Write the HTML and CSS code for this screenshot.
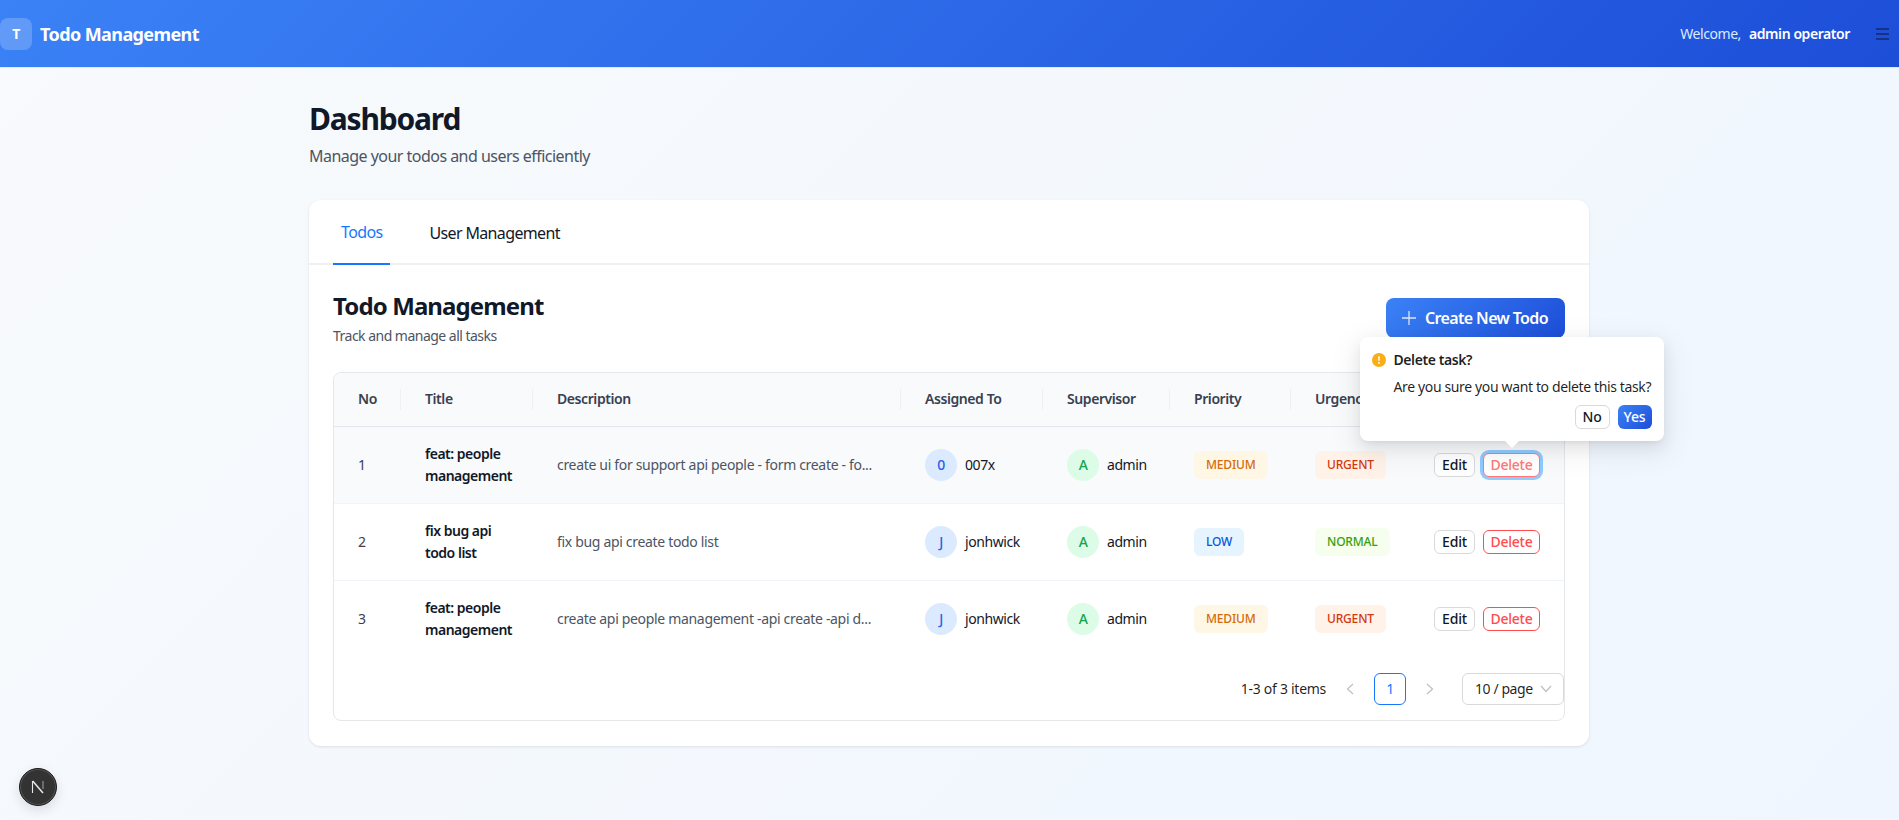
FILE: index.html
```html
<!DOCTYPE html>
<html lang="en">
<head>
    <meta charset="UTF-8" />
    <meta name="viewport" content="width=device-width, initial-scale=1" />
    <title>Todo Management</title>
    <link rel="stylesheet" href="styles.css">
</head>
<body>
    <header class="topbar">
        <div class="brand">
            <span class="brand_logo">T</span>
            <span class="brand_name">Todo Management</span>
        </div>
        <div class="user_box">
            <span class="welcome">Welcome,</span>
            <span class="user_name">admin operator</span>
            <svg class="burger" width="13" height="12" viewBox="0 0 13 12"><path d="M0 1h13M0 6h13M0 11h13" stroke="#14296b" stroke-width="1.5"/></svg>
        </div>
    </header>

    <main class="page">
        <h1 class="page_title">Dashboard</h1>
        <p class="page_sub">Manage your todos and users efficiently</p>

        <section class="card">
            <nav class="tabs">
                <a class="tab active">Todos</a>
                <a class="tab">User Management</a>
            </nav>

            <div class="card_body">
                <div class="section_head">
                    <div>
                        <h2 class="section_title">Todo Management</h2>
                        <p class="section_sub">Track and manage all tasks</p>
                    </div>
                    <button class="btn_create">
                        <svg width="14" height="14" viewBox="0 0 14 14"><path d="M7 0v14M0 7h14" stroke="#dbe6fd" stroke-width="1.3"/></svg>
                        Create New Todo
                    </button>
                </div>

                <div class="table_box">
                    <table class="todo_table">
                        <colgroup>
                            <col class="col_no"><col class="col_title"><col class="col_desc"><col class="col_assigned">
                            <col class="col_super"><col class="col_priority"><col class="col_urgency"><col class="col_actions">
                        </colgroup>
                        <thead>
                            <tr>
                                <th>No</th>
                                <th>Title</th>
                                <th>Description</th>
                                <th>Assigned To</th>
                                <th>Supervisor</th>
                                <th>Priority</th>
                                <th>Urgency</th>
                                <th>Actions</th>
                            </tr>
                        </thead>
                        <tbody>
                            <tr class="row_hover">
                                <td>1</td>
                                <td class="cell_title">feat: people management</td>
                                <td class="cell_desc">create ui for support api people - form create - fo...</td>
                                <td><div class="person"><span class="avatar blue">0</span>007x</div></td>
                                <td><div class="person"><span class="avatar green">A</span>admin</div></td>
                                <td><span class="badge orange">MEDIUM</span></td>
                                <td><span class="badge red">URGENT</span></td>
                                <td>
                                    <div class="actions">
                                        <button class="btn_small btn_edit">Edit</button>
                                        <div class="delete_wrap">
                                            <button class="btn_small btn_danger focused">Delete</button>
                                            <div class="popconfirm">
                                                <div class="pop_head">
                                                    <svg width="14" height="14" viewBox="0 0 14 14"><circle cx="7" cy="7" r="7" fill="#faad14"/><path d="M7 3.2v4.6" stroke="#fff" stroke-width="1.5"/><circle cx="7" cy="10" r=".9" fill="#fff"/></svg>
                                                    <span class="pop_title">Delete task?</span>
                                                </div>
                                                <p class="pop_msg">Are you sure you want to delete this task?</p>
                                                <div class="pop_btns">
                                                    <button class="btn_small">No</button>
                                                    <button class="btn_small btn_yes">Yes</button>
                                                </div>
                                            </div>
                                        </div>
                                    </div>
                                </td>
                            </tr>
                            <tr>
                                <td>2</td>
                                <td class="cell_title">fix bug api todo list</td>
                                <td class="cell_desc">fix bug api create todo list</td>
                                <td><div class="person"><span class="avatar blue">J</span>jonhwick</div></td>
                                <td><div class="person"><span class="avatar green">A</span>admin</div></td>
                                <td><span class="badge blue_tag">LOW</span></td>
                                <td><span class="badge green_tag">NORMAL</span></td>
                                <td>
                                    <div class="actions">
                                        <button class="btn_small btn_edit">Edit</button>
                                        <button class="btn_small btn_danger">Delete</button>
                                    </div>
                                </td>
                            </tr>
                            <tr>
                                <td>3</td>
                                <td class="cell_title">feat: people management</td>
                                <td class="cell_desc">create api people management -api create -api d...</td>
                                <td><div class="person"><span class="avatar blue">J</span>jonhwick</div></td>
                                <td><div class="person"><span class="avatar green">A</span>admin</div></td>
                                <td><span class="badge orange">MEDIUM</span></td>
                                <td><span class="badge red">URGENT</span></td>
                                <td>
                                    <div class="actions">
                                        <button class="btn_small btn_edit">Edit</button>
                                        <button class="btn_small btn_danger">Delete</button>
                                    </div>
                                </td>
                            </tr>
                        </tbody>
                    </table>

                    <div class="pager">
                        <span class="pager_total">1-3 of 3 items</span>
                        <svg class="pager_arrow" width="8" height="12" viewBox="0 0 8 12"><path d="M7 1L1.5 6L7 11" fill="none" stroke="#bfbfbf" stroke-width="1.2"/></svg>
                        <span class="pager_num">1</span>
                        <svg class="pager_arrow" width="8" height="12" viewBox="0 0 8 12"><path d="M1 1L6.5 6L1 11" fill="none" stroke="#bfbfbf" stroke-width="1.2"/></svg>
                        <div class="pager_size">
                            10 / page
                            <svg width="12" height="8" viewBox="0 0 12 8"><path d="M1 1L6 6.5L11 1" fill="none" stroke="#bfbfbf" stroke-width="1.2"/></svg>
                        </div>
                    </div>
                </div>
            </div>
        </section>
    </main>

    <div class="next_badge">
        <svg width="14" height="14" viewBox="0 0 14 14"><path d="M1.5 1v12" stroke="#e8e8e8" stroke-width="1.1"/><path d="M1.7 1L12 13" stroke="#e8e8e8" stroke-width="1.5"/><path d="M12 1v8" stroke="#9a9a9a" stroke-width="1.1"/></svg>
    </div>
</body>
</html>
```

FILE: styles.css
```css
* {
    box-sizing: border-box;
}

html, body {
    margin: 0;
    height: 100%;
}

body {
    font-family: "Noto Sans", "Open Sans", sans-serif;
    font-size: 14px;
    line-height: 22px;
    letter-spacing: -0.03em;
    color: #111827;
    background: linear-gradient(135deg, #f8fafc 0%, #eff6ff 100%);
    overflow: hidden;
}

button {
    font-family: inherit;
    letter-spacing: inherit;
}

.topbar {
    height: 68px;
    display: flex;
    align-items: center;
    justify-content: space-between;
    padding-right: 10px;
    background: linear-gradient(135deg, #3b82f6 0%, #1d4ed8 100%);
    border-bottom: 1px solid #dbeafe;
}

.brand {
    display: flex;
    align-items: center;
    gap: 8px;
}

.brand_logo {
    width: 32px;
    height: 32px;
    border-radius: 8px;
    background: rgba(255, 255, 255, 0.2);
    color: #fff;
    font-weight: 700;
    display: flex;
    align-items: center;
    justify-content: center;
}

.brand_name {
    color: #fff;
    font-size: 18px;
    font-weight: 700;
    letter-spacing: -0.033em;
}

.user_box {
    display: flex;
    align-items: center;
    color: #fff;
}

.welcome {
    color: #dbeafe;
    margin-right: 8px;
}

.user_name {
    font-weight: 600;
    margin-right: 26px;
}

.page {
    width: 1280px;
    margin-left: 309px;
    padding-top: 33px;
}

.page_title {
    margin: 0 0 7px;
    font-size: 30px;
    line-height: 36px;
    font-weight: 700;
    letter-spacing: -0.04em;
}

.page_sub {
    margin: 0 0 32px;
    font-size: 16px;
    line-height: 24px;
    letter-spacing: -0.033em;
    color: #4b5563;
}

.card {
    background: #fff;
    border-radius: 12px;
    box-shadow: 0 1px 3px rgba(0, 0, 0, 0.1);
}

.tabs {
    display: flex;
    gap: 31px;
    height: 65px;
    padding: 0 24px;
    border-bottom: 2px solid #f0f0f0;
}

.tab {
    display: flex;
    align-items: center;
    height: 65px;
    padding: 0 8px;
    font-size: 16px;
    letter-spacing: -0.04em;
    color: #111827;
}

.tab.active {
    color: #1677ff;
    border-bottom: 2px solid #1677ff;
}

.card_body {
    padding: 25px 24px;
}

.section_head {
    display: flex;
    align-items: center;
    justify-content: space-between;
    margin-bottom: 26px;
}

.section_title {
    margin: 0 0 4px;
    font-size: 24px;
    line-height: 32px;
    font-weight: 700;
    letter-spacing: -0.037em;
}

.section_sub {
    margin: 0;
    font-size: 14px;
    line-height: 20px;
    letter-spacing: -0.037em;
    color: #4b5563;
}

.btn_create {
    display: flex;
    align-items: center;
    gap: 9px;
    width: 179px;
    height: 40px;
    padding: 0 0 0 16px;
    border: none;
    border-radius: 8px;
    background: linear-gradient(135deg, #3b82f6 0%, #1d4ed8 100%);
    color: #fff;
    font-size: 16px;
    font-weight: 600;
    letter-spacing: -0.04em;
}

.table_box {
    border: 1px solid #e5e7eb;
    border-radius: 8px;
    padding-bottom: 15px;
}

.todo_table {
    width: 100%;
    border-collapse: collapse;
    table-layout: fixed;
}

.col_no { width: 67px; }
.col_title { width: 132px; }
.col_desc { width: 368px; }
.col_assigned { width: 142px; }
.col_super { width: 127px; }
.col_priority { width: 121px; }
.col_urgency { width: 119px; }
.col_actions { width: 154px; }

.todo_table th {
    position: relative;
    height: 53px;
    padding: 0 24px;
    text-align: left;
    font-weight: 600;
    color: #374151;
    background: #f9fafb;
    border-bottom: 1px solid #e2e8f0;
}

.todo_table th:first-child {
    border-top-left-radius: 8px;
}

.todo_table th:last-child {
    border-top-right-radius: 8px;
}

.todo_table th:not(:last-child)::before {
    content: "";
    position: absolute;
    right: 0;
    top: 16px;
    width: 1px;
    height: 21px;
    background: #eef0f3;
}

.todo_table td {
    height: 77px;
    padding: 16px 24px;
    color: #374151;
    border-bottom: 1px solid #f1f5f9;
}

.todo_table tr:last-child td {
    border-bottom: none;
}

.row_hover td {
    background: #f9fafb;
}

.todo_table .cell_title {
    color: #111827;
    font-weight: 600;
    letter-spacing: -0.035em;
}

.todo_table .cell_desc {
    color: #4b5563;
    white-space: nowrap;
    letter-spacing: -0.023em;
}

.person {
    display: flex;
    align-items: center;
    gap: 8px;
    color: #111827;
}

.avatar {
    width: 32px;
    height: 32px;
    flex: none;
    border-radius: 50%;
    display: flex;
    align-items: center;
    justify-content: center;
    font-weight: 500;
}

.avatar.blue {
    background: #dbeafe;
    color: #2563eb;
}

.avatar.green {
    background: #dcfce7;
    color: #16a34a;
}

.badge {
    display: inline-block;
    height: 28px;
    padding: 0 12px;
    border-radius: 6px;
    font-size: 12px;
    line-height: 28px;
    font-weight: 500;
    letter-spacing: -0.015em;
}

.badge.orange {
    background: #fff7e6;
    color: #d46b08;
}

.badge.red {
    background: #fff2e8;
    color: #d4380d;
}

.badge.blue_tag {
    background: #e6f4ff;
    color: #0958d9;
}

.badge.green_tag {
    background: #f6ffed;
    color: #389e0d;
}

.actions {
    display: flex;
    gap: 8px;
}

.delete_wrap {
    position: relative;
}

.btn_small {
    display: block;
    height: 24px;
    padding: 0 7px;
    background: #fff;
    border: 1px solid #d9d9d9;
    border-radius: 6px;
    font-size: 14px;
    line-height: 22px;
    font-weight: 500;
    letter-spacing: -0.01em;
    color: #111827;
}

.btn_edit {
    width: 41px;
    padding: 0;
}

.btn_danger {
    width: 57px;
    padding: 0;
    border-color: #ff4d4f;
    color: #ff4d4f;
    letter-spacing: -0.02em;
}

.btn_danger.focused {
    border-color: #ff7875;
    color: #ff7875;
    box-shadow: 0 0 0 3px #91caff;
}

.popconfirm {
    position: absolute;
    left: 50%;
    bottom: calc(100% + 12px);
    width: 304px;
    padding: 12px;
    transform: translateX(-50%);
    background: #fff;
    border-radius: 8px;
    box-shadow: 0 6px 16px rgba(0, 0, 0, 0.08), 0 3px 6px -4px rgba(0, 0, 0, 0.12), 0 9px 28px 8px rgba(0, 0, 0, 0.05);
    z-index: 5;
}

.popconfirm::after {
    content: "";
    position: absolute;
    left: 50%;
    bottom: -5px;
    width: 10px;
    height: 10px;
    margin-left: -5px;
    background: #fff;
    transform: rotate(45deg);
}

.pop_head {
    display: flex;
    align-items: center;
    gap: 8px;
}

.pop_title {
    font-weight: 600;
    color: rgba(0, 0, 0, 0.88);
}

.pop_msg {
    margin: 5px 0 7px 22px;
    white-space: nowrap;
    letter-spacing: -0.026em;
    color: rgba(0, 0, 0, 0.88);
}

.pop_btns {
    display: flex;
    justify-content: flex-end;
    gap: 8px;
}

.pop_btns .btn_small {
    width: 35px;
    padding: 0;
}

.pop_btns .btn_yes {
    width: 34px;
    border: none;
    background: linear-gradient(135deg, #3b82f6 0%, #1d4ed8 100%);
    color: #fff;
}

.pager {
    display: flex;
    align-items: center;
    justify-content: flex-end;
    margin-top: 16px;
    height: 32px;
}

.pager_total {
    color: rgba(0, 0, 0, 0.88);
    margin-right: 20px;
    letter-spacing: -0.02em;
}

.pager_num {
    width: 32px;
    height: 32px;
    margin: 0 20px;
    border: 1px solid #1677ff;
    border-radius: 6px;
    color: #1677ff;
    display: flex;
    align-items: center;
    justify-content: center;
}

.pager_size {
    width: 102px;
    height: 32px;
    margin-left: 28px;
    padding: 0 11px 0 12px;
    border: 1px solid #d9d9d9;
    border-radius: 6px;
    display: flex;
    align-items: center;
    justify-content: space-between;
    color: rgba(0, 0, 0, 0.88);
}

.next_badge {
    position: fixed;
    left: 19px;
    bottom: 14px;
    width: 38px;
    height: 38px;
    border-radius: 50%;
    background: #333;
    border: 1px solid #1c1c1c;
    box-shadow: inset 0 0 0 1px #555, 0 4px 12px rgba(0, 0, 0, 0.12);
    display: flex;
    align-items: center;
    justify-content: center;
}
```
